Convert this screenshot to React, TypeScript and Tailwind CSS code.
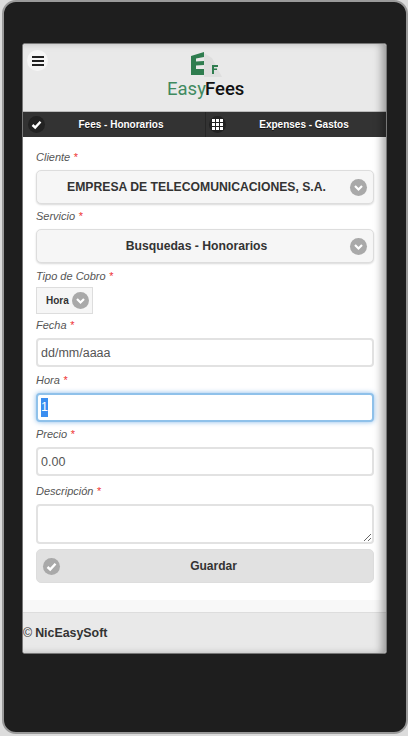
const FONT = "font-['Liberation_Sans',Arial,sans-serif]";

function Badge({ dark = false, children }: { dark?: boolean; children: React.ReactNode }) {
  return (
    <span className={`flex h-[17px] w-[17px] shrink-0 items-center justify-center rounded-full ${dark ? "bg-[#222]" : "bg-[#a9a9a9]"}`}>
      {children}
    </span>
  );
}

function Chevron() {
  return (
    <Badge>
      <svg width="11" height="11" viewBox="0 0 11 11" aria-hidden="true">
        <path d="M2 4 L5.5 7.5 L9 4" fill="none" stroke="#fff" strokeWidth="2.2" />
      </svg>
    </Badge>
  );
}

function Check({ dark = false }: { dark?: boolean }) {
  return (
    <Badge dark={dark}>
      <svg width="11" height="11" viewBox="0 0 11 11" aria-hidden="true">
        <path d="M1.5 6 L4.2 8.5 L9.5 2.8" fill="none" stroke="#fff" strokeWidth="2.4" />
      </svg>
    </Badge>
  );
}

function Grid() {
  return (
    <Badge dark>
      <svg width="11" height="11" viewBox="0 0 11 11" aria-hidden="true" fill="#fff">
        <rect x="0" y="0" width="3" height="3" />
        <rect x="4" y="0" width="3" height="3" />
        <rect x="8" y="0" width="3" height="3" />
        <rect x="0" y="4" width="3" height="3" />
        <rect x="4" y="4" width="3" height="3" />
        <rect x="8" y="4" width="3" height="3" />
        <rect x="0" y="8" width="3" height="3" />
        <rect x="4" y="8" width="3" height="3" />
        <rect x="8" y="8" width="3" height="3" />
      </svg>
    </Badge>
  );
}

function Logo() {
  return (
    <svg width="80" height="50" viewBox="0 0 80 50" aria-hidden="true">
      <path d="M39 4 L47 9 L57 28 L39 28 Z" fill="#dedede" />
      <path d="M26 7 L39 3 L39 8 L31 9.5 L31 12.5 L39 12 L39 16 L31 16.5 L31 20 L39 20 L39 26 L26 26 Z" fill="#2f7d4f" />
      <path d="M47 16 L53 16 L53 18 L49 18 L49 19.5 L52 19.5 L52 21 L49 21 L49 25 L47 25 Z" fill="#2f7d4f" />
      <text x="2" y="46" fontFamily="Roboto, sans-serif" fontSize="18.5" fill="#3f8a60">Easy</text>
      <text x="40" y="46" fontFamily="Roboto, sans-serif" fontSize="18.5" fontWeight="500" fill="#111">Fees</text>
    </svg>
  );
}

function Label({ text }: { text: string }) {
  return (
    <label className="mb-[6px] block h-[14px] text-[11px] italic leading-[14px] text-[#555]">
      {text} <span className="text-[#e33]">*</span>
    </label>
  );
}

function Select({ value }: { value: string }) {
  return (
    <div className="relative mb-[5px] flex h-[34px] items-center justify-center rounded-[5px] border border-[#ddd] bg-[#f6f6f6] pr-[17px] text-[12.2px] font-bold text-[#333] shadow-[0_1px_2px_rgba(0,0,0,0.15)]">
      {value}
      <span className="absolute right-[6px] top-[8px]">
        <Chevron />
      </span>
    </div>
  );
}

const inputClass =
  "block h-[29px] w-full rounded-[4px] border-2 border-[#e2e2e2] bg-white text-[12.5px] text-[#555] outline-none";

export default function App() {
  return (
    <div className={`${FONT} h-[736px] w-[408px] overflow-hidden bg-[#dcdcdc]`}>
      <div className="ml-[2px] h-[734px] w-[406px] rounded-[14px] border-2 border-[#9a9a9a] bg-[#1e1e1e] pl-[18px] pt-[41px]">
        <div className="relative flex h-[611px] w-[365px] flex-col overflow-hidden rounded-[3px] border border-[#777] bg-white">
          {/* header */}
          <div className="relative flex h-[67px] shrink-0 justify-center bg-[#e9e9e9] pt-[5px]">
            <span className="absolute left-[4px] top-[6px] flex h-[21px] w-[21px] items-center justify-center rounded-full bg-[#f6f6f6]">
              <span className="flex w-[12px] flex-col gap-[2px]">
                <span className="h-[2px] bg-[#222]" />
                <span className="h-[2px] bg-[#222]" />
                <span className="h-[2px] bg-[#222]" />
              </span>
            </span>
            <Logo />
          </div>

          {/* tabs */}
          <div className="flex h-[26px] shrink-0 border-t border-[#bbb] bg-[#333] text-[10px] font-bold text-white [text-shadow:0_1px_0_#111]">
            <div className="flex flex-1 items-center border-r border-[#262626] pl-[5px]">
              <Check dark />
              <span className="flex-1 pr-[8px] text-center">Fees - Honorarios</span>
            </div>
            <div className="flex flex-1 items-center pl-[3px]">
              <Grid />
              <span className="flex-1 pr-[4px] text-center">Expenses - Gastos</span>
            </div>
          </div>

          {/* form */}
          <div className="flex-1 pl-[13px] pr-[12px] pt-[13px]">
            <Label text="Cliente" />
            <Select value="EMPRESA DE TELECOMUNICACIONES, S.A." />
            <Label text="Servicio" />
            <Select value="Busquedas - Honorarios" />
            <div className="h-[1px]" />
            <Label text="Tipo de Cobro" />
            <div className="-mt-[2px] mb-[4px] flex h-[27px] w-[57px] items-center border border-[#ddd] bg-[#f6f6f6] pl-[9px] text-[10px] font-bold text-[#333]">
              <span className="mr-[3px]">Hora</span>
              <Chevron />
            </div>
            <Label text="Fecha" />
            <input readOnly defaultValue="dd/mm/aaaa" className={`${inputClass} mb-[6px] px-[3px]`} />
            <Label text="Hora" />
            <div className="mb-[5px] flex h-[29px] items-center rounded-[4px] border-2 border-[#8fc1ea] bg-white px-[3px] text-[12.5px] shadow-[0_0_5px_rgba(56,140,220,0.6)]">
              <span className="w-[7px] bg-[#3b8ef0] text-white">1</span>
            </div>
            <Label text="Precio" />
            <input readOnly defaultValue="0.00" className={`${inputClass} mb-[8px] px-[3px]`} />
            <Label text="Descripción" />
            <textarea readOnly className="mb-[5px] block h-[40px] w-full rounded-[4px] border-2 border-[#e2e2e2] bg-white outline-none" />
            <div className="relative flex h-[34px] items-center justify-center rounded-[5px] border border-[#ddd] bg-[#e1e1e1] pl-[17px] text-[12px] font-bold text-[#333]">
              Guardar
              <span className="absolute left-[6px] top-[8px]">
                <Check />
              </span>
            </div>
          </div>

          {/* footer */}
          <div className="h-[12px] shrink-0 bg-[#f8f8f8]" />
          <div className="flex h-[41px] shrink-0 items-center border-t border-[#ddd] bg-[#e9e9e9] text-[12.4px] font-bold text-[#333]">
            <span className="mr-[3px] font-normal">©</span>NicEasySoft
          </div>

          <div className="pointer-events-none absolute inset-0 shadow-[inset_-6px_0_8px_-2px_rgba(0,0,0,0.35)]" />
        </div>
      </div>
    </div>
  );
}
